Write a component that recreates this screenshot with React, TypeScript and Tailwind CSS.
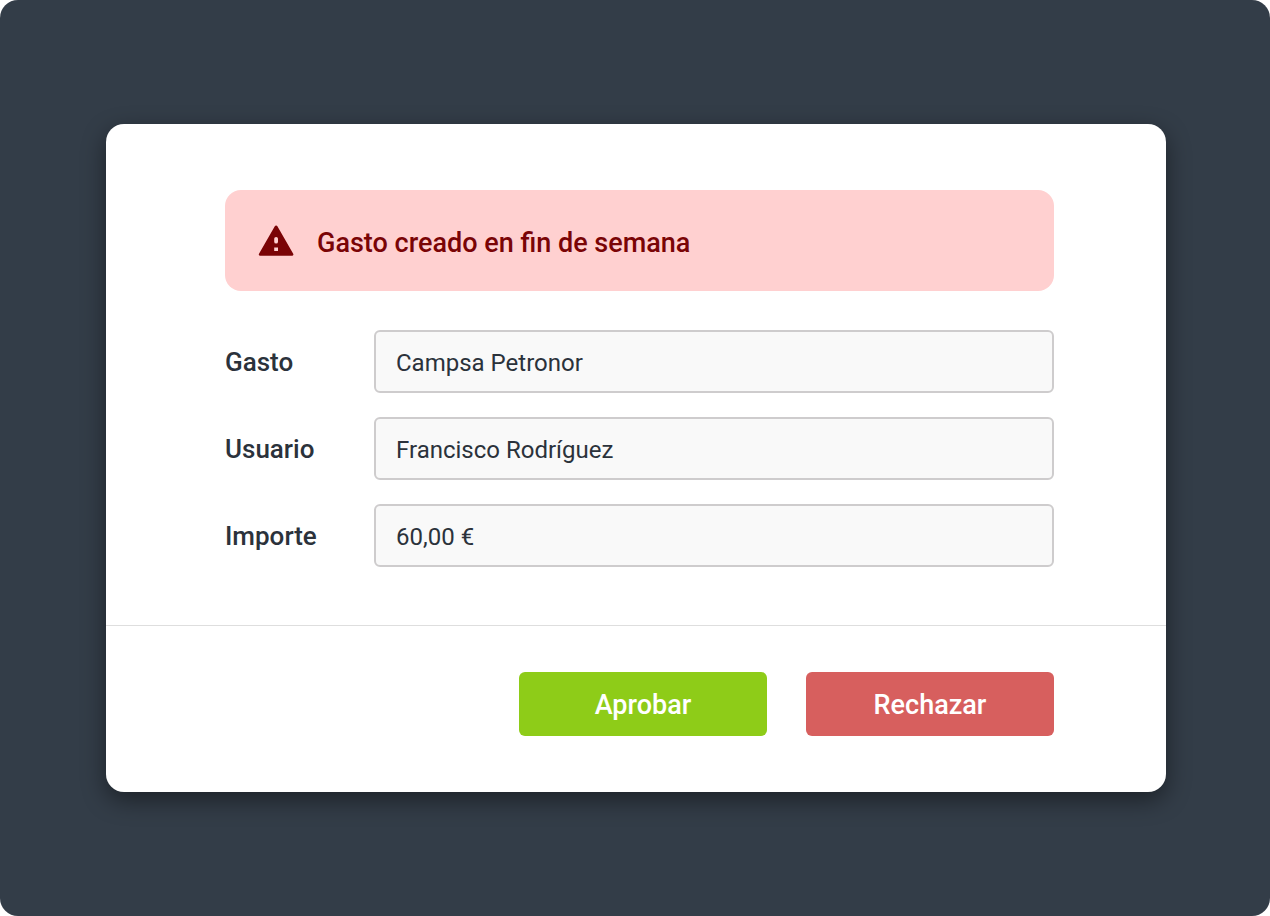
import { useState } from 'react';

interface FieldProps {
  id: string;
  label: string;
  value: string;
  onChange: (value: string) => void;
}

function Field({ id, label, value, onChange }: FieldProps) {
  return (
    <div className="flex items-center">
      <label htmlFor={id} className="w-[149px] shrink-0 text-[26px] leading-8 font-medium">
        {label}
      </label>
      <input
        id={id}
        type="text"
        value={value}
        onChange={(e) => onChange(e.target.value)}
        className="h-[63px] min-w-0 flex-1 rounded-md border-2 border-[#cecccd] bg-[#f9f9f9] px-5 pt-[3px] text-2xl"
      />
    </div>
  );
}

function WarningIcon() {
  return (
    <svg className="h-[31px] w-9 shrink-0" viewBox="0 0 36 31" fill="none" aria-hidden="true">
      <path
        fill="#7a0406"
        fillRule="evenodd"
        d="M16.8 1.2a1.5 1.5 0 0 1 2.6 0L35.2 28.8a1.2 1.2 0 0 1-1.1 1.9H2.1a1.2 1.2 0 0 1-1.1-1.9L16.8 1.2ZM18.1 11.9a1.9 1.9 0 0 0-1.9 1.9v2.9a1.9 1.9 0 0 0 3.8 0v-2.9a1.9 1.9 0 0 0-1.9-1.9ZM16.2 22.5V26H20v-3.5h-3.8Z"
      />
    </svg>
  );
}

export default function App() {
  const [expense, setExpense] = useState({
    gasto: 'Campsa Petronor',
    usuario: 'Francisco Rodríguez',
    importe: '60,00 €',
  });

  const update = (key: keyof typeof expense) => (value: string) =>
    setExpense((prev) => ({ ...prev, [key]: value }));

  return (
    <main className="flex min-h-screen items-center rounded-[18px] bg-[#333d48] py-10 pr-[104px] pl-[106px] font-[Roboto,sans-serif] text-[#2b323b]">
      <form
        className="w-full rounded-[18px] bg-white shadow-[0_8px_24px_rgba(0,0,0,0.45)]"
        onSubmit={(e) => e.preventDefault()}
      >
        <div className="border-b border-[#dedede] pt-[66px] pr-28 pb-[58px] pl-[119px]">
          <div
            role="alert"
            className="flex items-start gap-[23px] rounded-2xl bg-[#ffd0d0] px-[33px] pt-[35px] pb-[29px] text-[#7a0406]"
          >
            <WarningIcon />
            <p className="text-[27px] leading-[37px] font-medium">Gasto creado en fin de semana</p>
          </div>

          <div className="mt-[39px] flex flex-col gap-6">
            <Field id="gasto" label="Gasto" value={expense.gasto} onChange={update('gasto')} />
            <Field id="usuario" label="Usuario" value={expense.usuario} onChange={update('usuario')} />
            <Field id="importe" label="Importe" value={expense.importe} onChange={update('importe')} />
          </div>
        </div>

        <div className="flex justify-end gap-[39px] pt-[46px] pr-28 pb-14">
          <button
            type="submit"
            className="h-16 w-[248px] rounded-md bg-[#8ecc18] pt-0.5 text-[27px] font-medium text-white"
          >
            Aprobar
          </button>
          <button
            type="button"
            className="h-16 w-[248px] rounded-md bg-[#d75f5e] pt-0.5 text-[27px] font-medium text-white"
          >
            Rechazar
          </button>
        </div>
      </form>
    </main>
  );
}
